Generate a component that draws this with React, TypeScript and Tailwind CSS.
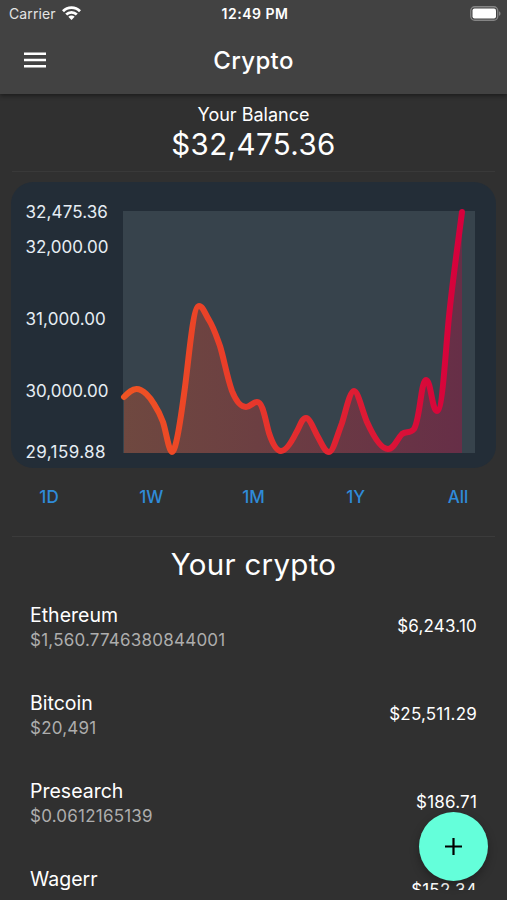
const axisLabels = [
  { label: "32,475.36", className: "top-[19px] tracking-[0.1px]" },
  { label: "32,000.00", className: "top-[54px]" },
  { label: "31,000.00", className: "top-[126px] tracking-[0.1px]" },
  { label: "30,000.00", className: "top-[198px]" },
  { label: "29,159.88", className: "top-[259px] tracking-[0.4px]" },
];

const ranges = ["1D", "1W", "1M", "1Y", "All"];

const coins = [
  { name: "Ethereum", price: "$1,560.7746380844001", value: "$6,243.10" },
  { name: "Bitcoin", price: "$20,491", value: "$25,511.29" },
  { name: "Presearch", price: "$0.0612165139", value: "$186.71" },
  { name: "Wagerr", price: "", value: "$152.34" },
];

const line =
  "M1 186C6 181 9 178 13.500 178C20 178 27 186 31 193C35 199 37 203 40 211C43 220 46 241 49 241C53 241 58 206 62 176C66 146 70 95 76 95C80 95 82 103 86 109C91 117 94 127 97 135C101 148 104 166 109 180C113 190 118 196 123 196C127 196 130 191 134 191C140 191 142 208 146 222C149 231 153 240 158 240C163 240 169 230 173 222C177 215 179 207 183 207C187 207 191 219 195 226C199 233 202 241 206 241C210 241 214 225 219 212C223 199 227 180 231 180C235 180 239 199 244 211C249 222 257 238 265 238C271 238 274 228 279 223C283 220 287 223 291 218C297 209 298 169 303 169C308 169 309 200 314 200C319 200 322 150 325 116C328 81 334 40 339 1";

function Chart() {
  return (
    <svg width="352" height="242" viewBox="0 0 352 242" className="overflow-visible">
      <defs>
        <linearGradient id="stroke" gradientUnits="userSpaceOnUse" x1="0" y1="0" x2="339" y2="0">
          <stop offset="0" stopColor="#f05423" />
          <stop offset="0.35" stopColor="#e83a2a" />
          <stop offset="1" stopColor="#d5003c" />
        </linearGradient>
      </defs>
      <rect width="352" height="242" fill="#37434c" />
      <path d={`${line}V242H1Z`} fill="url(#stroke)" fillOpacity="0.3" />
      <path d={line} fill="none" stroke="url(#stroke)" strokeWidth="6" strokeLinecap="round" strokeLinejoin="round" />
    </svg>
  );
}

export default function App() {
  return (
    <div className="relative flex h-[900px] w-[507px] flex-col overflow-hidden bg-[#303030] font-['Inter',sans-serif] text-white">
      <header className="z-10 h-[94px] shrink-0 bg-[#424242] shadow-[0_2px_4px_rgba(0,0,0,0.4)]">
        {/* Status bar */}
        <div className="grid h-[26px] grid-cols-[1fr_auto_1fr] items-center pr-[6px] pl-[9px] text-[14px]">
          <div className="flex items-center gap-[6px] text-[#e4e4e4]">
            <span className="tracking-[0.1px]">Carrier</span>
            <svg width="19" height="14" viewBox="0 0 19 14" fill="none" stroke="#fff" strokeWidth="2.800">
              <path d="M1 5.200C5.700 0.500 13.300 0.500 18 5.200" />
              <path d="M4.200 8.600C7.200 5.700 11.800 5.700 14.800 8.600" />
              <path d="M9.500 14L6.300 10.700C8.100 9 10.900 9 12.700 10.700Z" fill="#fff" stroke="none" />
            </svg>
          </div>
          <span className="pt-px text-[14px] font-semibold tracking-[0.5px]">12:49 PM</span>
          <svg width="31" height="15" viewBox="0 0 31 15" className="justify-self-end">
            <rect x="0.750" y="0.750" width="27" height="13.500" rx="4" fill="none" stroke="#858585" strokeWidth="1.300" />
            <rect x="2.500" y="2.500" width="23.500" height="10" rx="2" fill="#fff" />
            <path d="M29 5.200C31 6 31 9 29 9.800Z" fill="#858585" />
          </svg>
        </div>

        {/* App bar */}
        <div className="grid h-[67px] grid-cols-[1fr_auto_1fr] items-center px-[24px]">
          <svg width="22" height="16" viewBox="0 0 22 16" fill="#fff">
            <path d="M0 0.500h22v2.500H0zM0 6.700h22v2.500H0zM0 12.900h22v2.500H0z" />
          </svg>
          <h1 className="pt-[2px] text-[24px] font-medium tracking-[0.4px]">Crypto</h1>
        </div>
      </header>

      <section className="mx-[12px] flex h-[78px] shrink-0 flex-col items-center border-b border-[#393939] pt-[8px]">
        <p className="text-[18px] leading-[25px]">Your Balance</p>
        <p className="text-[29.500px] leading-[35px] tracking-[0.400px]">$32,475.36</p>
      </section>

      <section className="relative mx-[11px] mt-[10px] h-[286px] shrink-0 rounded-[22px] bg-[#232d37] pt-[29px] pl-[112px]">
        {axisLabels.map((a) => (
          <span key={a.label} className={`absolute left-[14.500px] text-[17px] leading-[22px] text-[#e6edf4] ${a.className}`}>
            {a.label}
          </span>
        ))}
        <Chart />
      </section>

      <nav className="mx-[12px] grid h-[69px] shrink-0 grid-cols-[74px_130px_74px_130px_74px] justify-between border-b border-[#3b3b3b] text-[17px] font-medium text-[#2f8bd8]">
        {ranges.map((r) => (
          <button key={r} className="h-[59px]">
            {r}
          </button>
        ))}
      </nav>

      <h2 className="h-[47px] shrink-0 pt-[8px] text-center text-[29.500px] leading-[38px] tracking-[0.300px]">Your crypto</h2>

      <ul className="h-[306px] shrink-0 overflow-hidden">
        {coins.map((c) => (
          <li key={c.name} className="flex h-[88px] items-center justify-between px-[30px]">
            <div>
              <p className="text-[19.500px] leading-[25px]">{c.name}</p>
              <p className="h-[25px] text-[17px] leading-[25px] tracking-[0.220px] text-[#adadad]">{c.price}</p>
            </div>
            <span className="-mt-[3px] text-[17px] tracking-[0.200px]">{c.value}</span>
          </li>
        ))}
      </ul>

      <button
        aria-label="Add"
        className="absolute right-[19px] bottom-[19px] flex size-[69px] items-center justify-center rounded-full bg-[#64ffda] shadow-[0_4px_10px_rgba(0,0,0,0.3)]"
      >
        <svg width="17" height="17" viewBox="0 0 17 17" stroke="#000" strokeWidth="2.200">
          <path d="M8.500 0v17M0 8.500h17" />
        </svg>
      </button>
    </div>
  );
}
